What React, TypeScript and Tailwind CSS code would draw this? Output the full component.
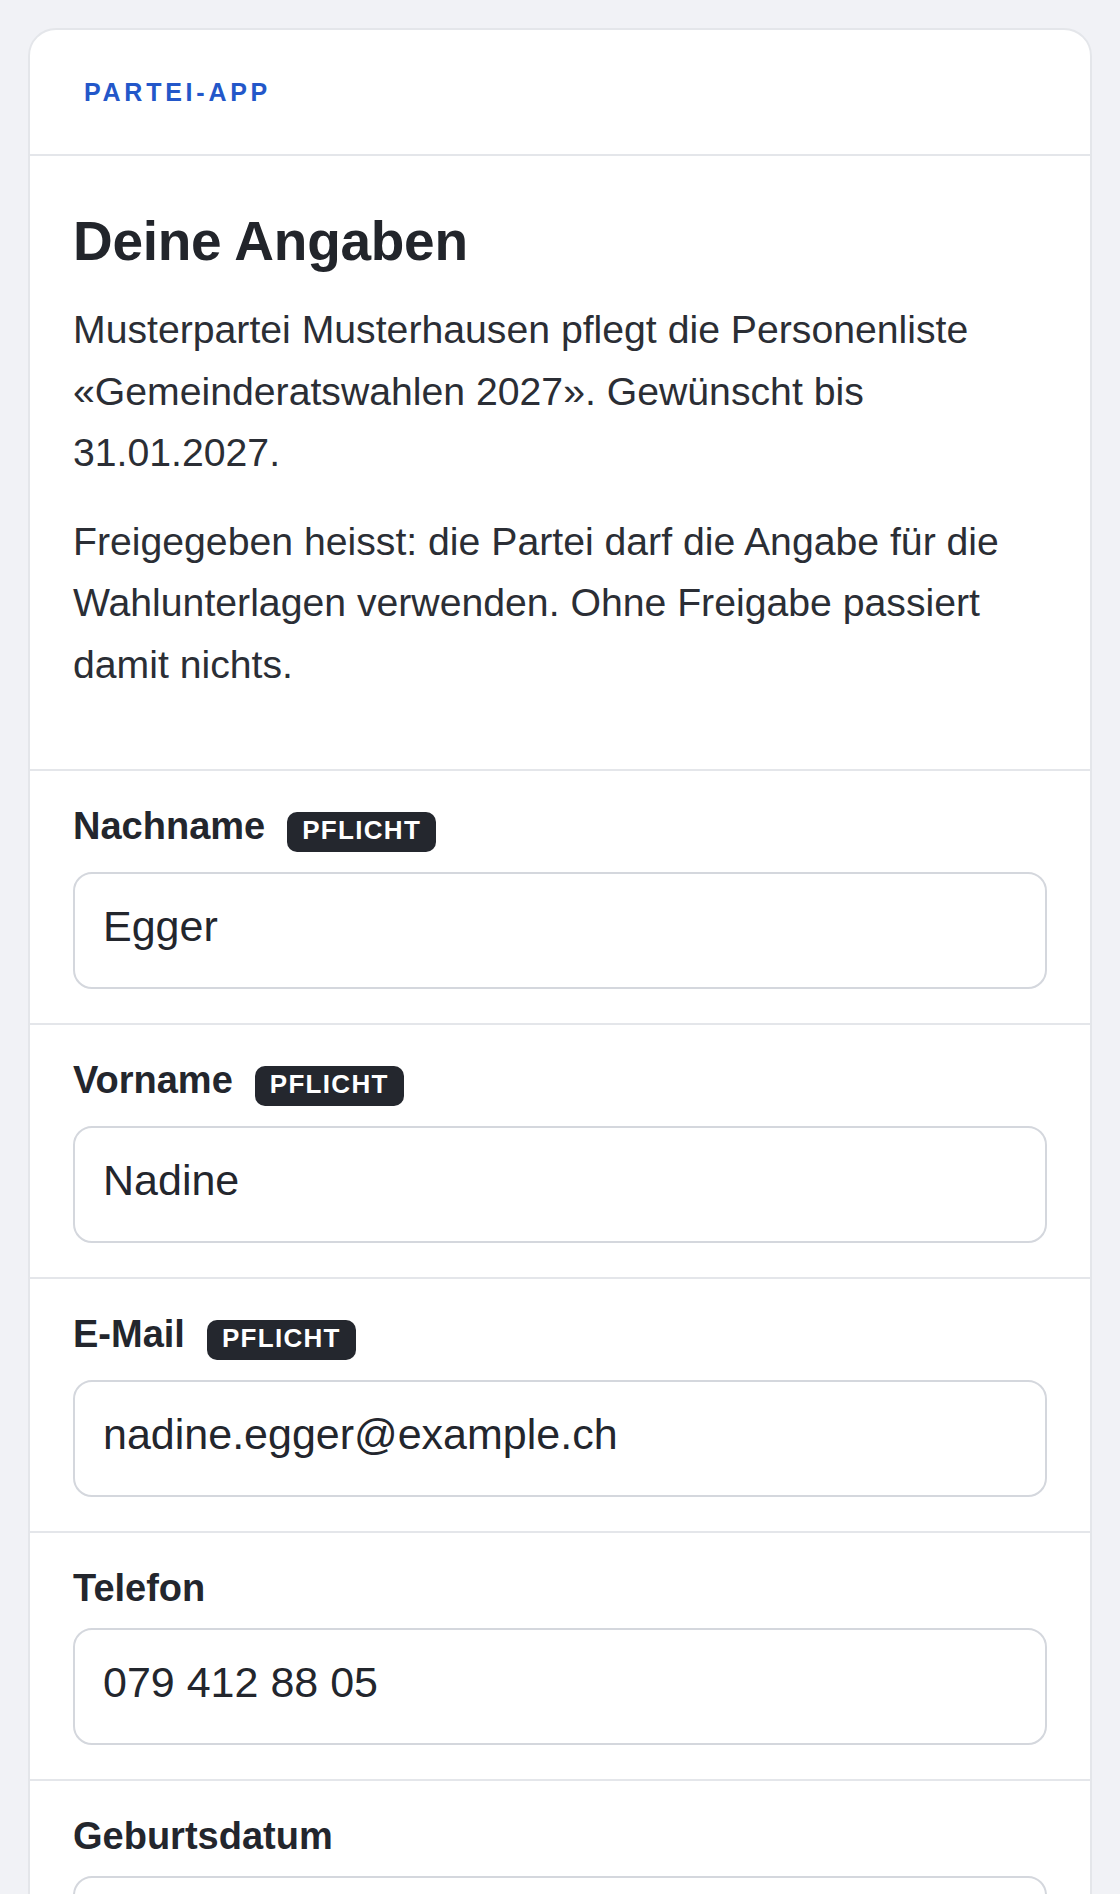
import { useState } from "react";

type FieldDef = {
  label: string;
  name: string;
  value: string;
  required?: boolean;
  type?: string;
};

const fields: FieldDef[] = [
  { label: "Nachname", name: "lastName", value: "Egger", required: true },
  { label: "Vorname", name: "firstName", value: "Nadine", required: true },
  { label: "E-Mail", name: "email", value: "nadine.egger@example.ch", required: true, type: "email" },
  { label: "Telefon", name: "phone", value: "079 412 88 05", type: "tel" },
  { label: "Geburtsdatum", name: "birthDate", value: "" },
];

const Badge = () => (
  <span className="rounded-[10px] bg-[#24272e] px-[15px] pt-[3px] pb-[7px] text-[26px] leading-[30px] font-bold tracking-[0.05em] text-white">
    PFLICHT
  </span>
);

const Field = ({ field }: { field: FieldDef }) => {
  const [value, setValue] = useState(field.value);

  return (
    <section className="border-t-2 border-[#e4e6ea] px-[43px] pt-[36px] pb-[34px]">
      <label htmlFor={field.name} className="flex items-baseline gap-[22px]">
        <span className="text-[38px] leading-[39px] font-bold text-[#23262d]">{field.label}</span>
        {field.required && <Badge />}
      </label>
      <input
        id={field.name}
        name={field.name}
        type={field.type ?? "text"}
        value={value}
        onChange={(e) => setValue(e.target.value)}
        className="mt-5 block h-[117px] w-full rounded-[19px] border-2 border-[#d4d7dd] bg-white pr-[26px] pl-[28px] pb-[8px] text-[43px] text-[#23262d] outline-none"
      />
    </section>
  );
};

export default function App() {
  return (
    <div className="h-[1894px] overflow-hidden bg-[#f1f2f6] px-[28px] pt-[28px] font-['Liberation_Sans',Arial,sans-serif]">
      <div className="rounded-[28px] border-2 border-[#e4e6ea] bg-white">
        <header className="px-[54px] py-[47px]">
          <div className="text-[25px] leading-[30px] font-bold tracking-[0.15em] text-[#2357c9]">PARTEI-APP</div>
        </header>

        <section className="border-t-2 border-[#e4e6ea] px-[43px] pt-[52px] pb-[73px]">
          <h1 className="text-[55px] leading-[66px] font-bold tracking-[-0.005em] text-[#22252b]">Deine Angaben</h1>
          <p className="mt-[25px] text-[39.2px] leading-[61.6px] text-[#2b2e35]">
            Musterpartei Musterhausen pflegt die Personenliste «Gemeinderatswahlen 2027». Gewünscht bis 31.01.2027.
          </p>
          <p className="mt-[27px] text-[39.2px] leading-[61.6px] text-[#2b2e35]">
            Freigegeben heisst: die Partei darf die Angabe für die Wahlunterlagen verwenden. Ohne Freigabe passiert damit
            nichts.
          </p>
        </section>

        {fields.map((f) => (
          <Field key={f.name} field={f} />
        ))}
      </div>
    </div>
  );
}
